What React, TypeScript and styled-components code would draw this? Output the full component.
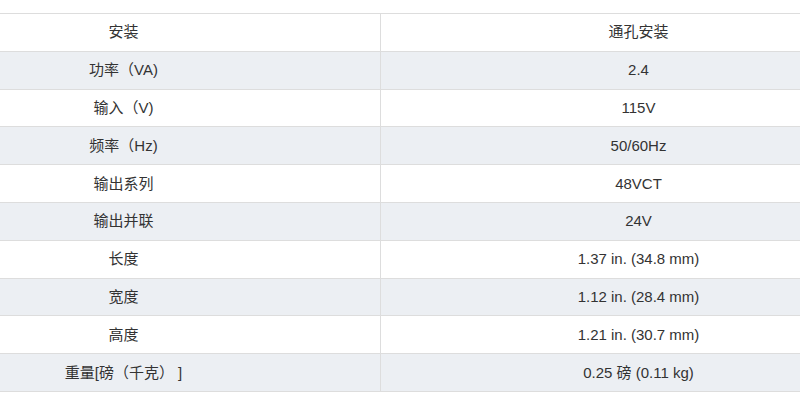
import React from "react";
import styled, { createGlobalStyle } from "styled-components";

const Global = createGlobalStyle`
  html, body { margin: 0; padding: 0; background: #fff; overflow: hidden; }
  body { width: 800px; height: 404px; }
`;

const Page = styled.div`
  width: 800px;
  height: 404px;
  overflow: hidden;
  padding-top: 13px;
  box-sizing: border-box;
`;

const Table = styled.table`
  margin-left: -134px;
  width: 1030px;
  border-collapse: collapse;
  table-layout: fixed;
  font-family: "Liberation Sans", Arial, "Noto Sans CJK SC", sans-serif;
  font-size: 15px;
  color: #333;
`;

const Row = styled.tr<{ $shade: boolean }>`
  background: ${(p) => (p.$shade ? "#eceff3" : "#ffffff")};
`;

const Cell = styled.td`
  height: 37.8px;
  box-sizing: border-box;
  padding: 0 8px;
  text-align: center;
  vertical-align: middle;
  border: 1px solid #dddddd;
  line-height: 20px;
  white-space: pre;
`;

const rows: [string, string][] = [
  ["安装", "通孔安装"],
  ["功率（VA)", "2.4"],
  ["输入（V)", "115V"],
  ["频率（Hz)", "50/60Hz"],
  ["输出系列", "48VCT"],
  ["输出并联", "24V"],
  ["长度", "1.37 in. (34.8 mm)"],
  ["宽度", "1.12 in. (28.4 mm)"],
  ["高度", "1.21 in. (30.7 mm)"],
  ["重量[磅（千克） ]", "0.25 磅 (0.11 kg)"],
];

export default function App() {
  return (
    <>
      <Global />
      <Page>
        <Table>
          <colgroup>
            <col style={{ width: 514 }} />
            <col style={{ width: 516 }} />
          </colgroup>
          <tbody>
            {rows.map(([k, v], i) => (
              <Row key={k} $shade={i % 2 === 1}>
                <Cell>{k}</Cell>
                <Cell>{v}</Cell>
              </Row>
            ))}
          </tbody>
        </Table>
      </Page>
    </>
  );
}
